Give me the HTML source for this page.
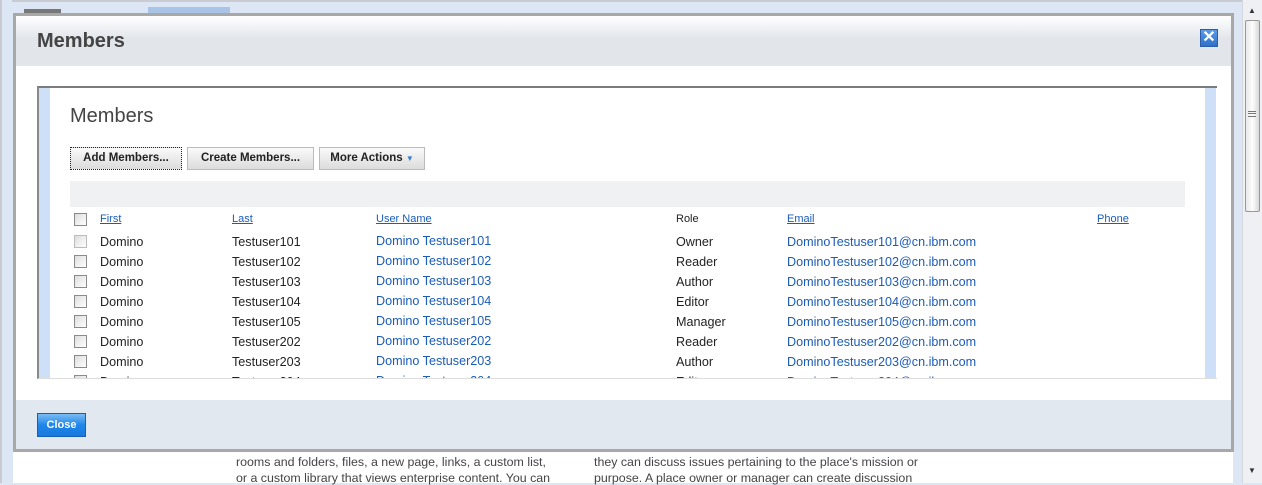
<!DOCTYPE html>
<html><head><style>
*{margin:0;padding:0;box-sizing:border-box}
body{width:1262px;height:483px;overflow:hidden;position:relative;background:#dde6f4;font-family:"Liberation Sans",Arial,sans-serif}
.abs{position:absolute}
.cb{position:absolute;width:13px;height:13px;border:1px solid #8a8a8a;background:linear-gradient(135deg,#ddd,#fff)}
.t{position:absolute;font-size:12.6px;color:#222;white-space:nowrap}
.l{color:#1a5cb8}
.h{position:absolute;font-size:11px;color:#1a5cb8;text-decoration:underline}
.btn{position:absolute;top:147px;height:23px;border:1px solid #bbb;background:linear-gradient(#fafafa,#dcdcdc);font-size:11.5px;font-weight:bold;color:#222;text-align:center;line-height:21px}
</style></head><body>
<div class="abs" style="left:0;top:0;width:1262px;height:2px;background:#c8ccd2"></div>
<div class="abs" style="left:24px;top:9px;width:37px;height:8px;background:#777"></div>
<div class="abs" style="left:148px;top:7px;width:82px;height:10px;background:#a9c4e6"></div>
<div class="abs" style="left:13px;top:451px;width:1220px;height:32px;background:#fff"></div>
<div class="abs" style="left:0;top:0;width:12px;height:483px;background:#dde6f4;border-left:2px solid #c8ccd2"></div>
<div class="t" style="left:236px;top:455px;color:#444;font-size:12.4px">rooms and folders, files, a new page, links, a custom list,</div>
<div class="t" style="left:236px;top:471px;color:#444;font-size:12.4px">or a custom library that views enterprise content. You can</div>
<div class="t" style="left:594px;top:455px;color:#444;font-size:12.4px">they can discuss issues pertaining to the place's mission or</div>
<div class="t" style="left:594px;top:471px;color:#444;font-size:12.4px">purpose. A place owner or manager can create discussion</div>
<div class="abs" style="left:1242px;top:0;width:20px;height:483px;background:#eef0f3;border-left:1px solid #d5d8dc"></div>
<div class="abs" style="left:1245px;top:20px;width:15px;height:192px;background:linear-gradient(90deg,#e8e8e8,#fdfdfd,#d8d8d8);border:1px solid #999;border-radius:2px"></div>
<div class="abs" style="left:1248px;top:6px;font-size:8px;color:#333">▲</div>
<div class="abs" style="left:1248px;top:466px;font-size:8px;color:#333">▼</div>
<div class="abs" style="left:1248px;top:111px;width:8px;height:6px;border-top:1px solid #777;border-bottom:1px solid #777"></div>
<div class="abs" style="left:1248px;top:113px;width:8px;height:1px;background:#777"></div>
<div class="abs" style="left:13px;top:13px;width:1221px;height:439px;border:3px solid #a8a8a8;background:#fff"></div>
<div class="abs" style="left:16px;top:16px;width:1215px;height:50px;background:linear-gradient(#fff 0%,#e2e6eb 45%,#e2e6eb)"></div>
<div class="abs" style="left:37px;top:30px;font-size:20px;font-weight:bold;color:#444">Members</div>
<div class="abs" style="left:1200px;top:29px;width:18px;height:18px;background:linear-gradient(#5b9be6,#2f6fc8);border:1px solid #2a5ea8;color:#fff;font-size:16px;line-height:16px;text-align:center;font-weight:bold">✕</div>
<div class="abs" style="left:37px;top:86px;width:1180px;height:293px;border-top:2px solid #7b7b7b;border-left:2px solid #8a8a8a;background:#fff;border-bottom:1px solid #ddd"></div>
<div class="abs" style="left:39px;top:88px;width:11px;height:290px;background:#cde0f8"></div>
<div class="abs" style="left:1205px;top:88px;width:11px;height:290px;background:#cde0f8"></div>
<div class="abs" style="left:70px;top:105px;font-size:20px;color:#444">Members</div>
<div class="btn" style="left:70px;width:112px;border:1px dotted #222">Add Members...</div>
<div class="btn" style="left:187px;width:127px">Create Members...</div>
<div class="btn" style="left:319px;width:106px">More Actions <span style="color:#3a7fd5;font-size:8px">▼</span></div>
<div class="abs" style="left:70px;top:181px;width:1115px;height:26px;background:#f0f1f3"></div>
<div class="cb" style="left:74px;top:213px"></div>
<div class="h" style="left:100px;top:213px">First</div>
<div class="h" style="left:232px;top:213px">Last</div>
<div class="h" style="left:376px;top:213px">User Name</div>
<div class="abs" style="left:676px;top:213px;font-size:11px;color:#222">Role</div>
<div class="h" style="left:787px;top:213px">Email</div>
<div class="h" style="left:1097px;top:213px">Phone</div>
<div class="abs" style="left:50px;top:230px;width:1155px;height:148px;overflow:hidden">
<div style="position:relative;left:-50px;top:-230px">
<div class="cb" style="left:74px;top:235px;border-color:#bbb"></div><div class="t" style="left:100px;top:235px">Domino</div><div class="t" style="left:232px;top:235px">Testuser101</div><div class="t l" style="left:376px;top:234px">Domino Testuser101</div><div class="t" style="left:676px;top:235px">Owner</div><div class="t l" style="left:787px;top:235px">DominoTestuser101@cn.ibm.com</div>
<div class="cb" style="left:74px;top:255px"></div><div class="t" style="left:100px;top:255px">Domino</div><div class="t" style="left:232px;top:255px">Testuser102</div><div class="t l" style="left:376px;top:254px">Domino Testuser102</div><div class="t" style="left:676px;top:255px">Reader</div><div class="t l" style="left:787px;top:255px">DominoTestuser102@cn.ibm.com</div>
<div class="cb" style="left:74px;top:275px"></div><div class="t" style="left:100px;top:275px">Domino</div><div class="t" style="left:232px;top:275px">Testuser103</div><div class="t l" style="left:376px;top:274px">Domino Testuser103</div><div class="t" style="left:676px;top:275px">Author</div><div class="t l" style="left:787px;top:275px">DominoTestuser103@cn.ibm.com</div>
<div class="cb" style="left:74px;top:295px"></div><div class="t" style="left:100px;top:295px">Domino</div><div class="t" style="left:232px;top:295px">Testuser104</div><div class="t l" style="left:376px;top:294px">Domino Testuser104</div><div class="t" style="left:676px;top:295px">Editor</div><div class="t l" style="left:787px;top:295px">DominoTestuser104@cn.ibm.com</div>
<div class="cb" style="left:74px;top:315px"></div><div class="t" style="left:100px;top:315px">Domino</div><div class="t" style="left:232px;top:315px">Testuser105</div><div class="t l" style="left:376px;top:314px">Domino Testuser105</div><div class="t" style="left:676px;top:315px">Manager</div><div class="t l" style="left:787px;top:315px">DominoTestuser105@cn.ibm.com</div>
<div class="cb" style="left:74px;top:335px"></div><div class="t" style="left:100px;top:335px">Domino</div><div class="t" style="left:232px;top:335px">Testuser202</div><div class="t l" style="left:376px;top:334px">Domino Testuser202</div><div class="t" style="left:676px;top:335px">Reader</div><div class="t l" style="left:787px;top:335px">DominoTestuser202@cn.ibm.com</div>
<div class="cb" style="left:74px;top:355px"></div><div class="t" style="left:100px;top:355px">Domino</div><div class="t" style="left:232px;top:355px">Testuser203</div><div class="t l" style="left:376px;top:354px">Domino Testuser203</div><div class="t" style="left:676px;top:355px">Author</div><div class="t l" style="left:787px;top:355px">DominoTestuser203@cn.ibm.com</div>
<div class="cb" style="left:74px;top:375px"></div><div class="t" style="left:100px;top:375px">Domino</div><div class="t" style="left:232px;top:375px">Testuser204</div><div class="t l" style="left:376px;top:374px">Domino Testuser204</div><div class="t" style="left:676px;top:375px">Editor</div><div class="t l" style="left:787px;top:375px">DominoTestuser204@cn.ibm.com</div>
</div></div>
<div class="abs" style="left:16px;top:400px;width:1215px;height:49px;background:#e1e8f0"></div>
<div class="abs" style="left:37px;top:413px;width:49px;height:24px;background:linear-gradient(#7cbcf5,#1e86ea 50%,#1a78dc);border:1px solid #1560b8;color:#fff;font-size:11px;font-weight:bold;text-align:center;line-height:22px">Close</div>
</body></html>
